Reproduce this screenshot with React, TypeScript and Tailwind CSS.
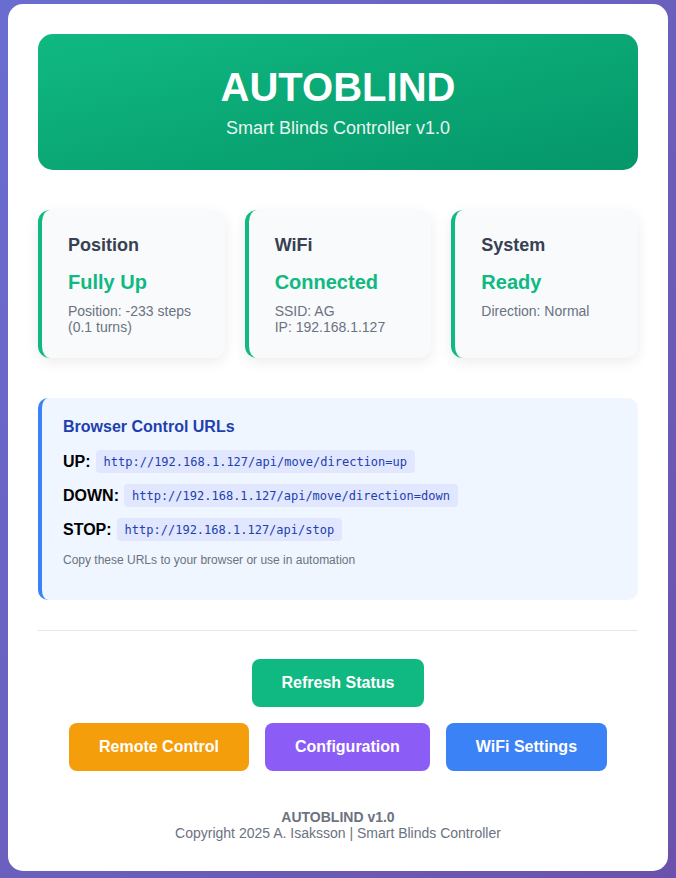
const sans = { fontFamily: '"Liberation Sans", Arial, sans-serif' };

function StatusCard({ title, value, lines }: { title: string; value: string; lines: string[] }) {
  return (
    <div className="bg-[#f8fafc] rounded-xl border-l-4 border-[#10b981] pl-[26px] pr-[25px] pt-[25px] pb-[23px] shadow-[0_4px_14px_rgba(0,0,0,0.08)]">
      <h3 className="text-[18px] leading-[21px] font-bold text-[#374151] mb-[15px]">{title}</h3>
      <div className="text-[20px] leading-[23px] font-bold text-[#10b981] mb-[9px]">{value}</div>
      <div className="text-[14px] leading-[16px] text-[#6b7280]">
        {lines.map((l) => (
          <div key={l}>{l}</div>
        ))}
      </div>
    </div>
  );
}

function UrlRow({ label, url, last }: { label: string; url: string; last?: boolean }) {
  return (
    <div className={`flex items-center h-[23px] ${last ? "mb-3" : "mb-[11px]"}`}>
      <span className="text-[16px] font-bold text-black">{label}</span>
      <code className="ml-[5px] h-[23px] flex items-center px-2 rounded bg-[#e0e7ff] text-[12px] text-[#1e40af] font-['DejaVu_Sans_Mono',monospace]">
        {url}
      </code>
    </div>
  );
}

function Btn({ label, color }: { label: string; color: string }) {
  return (
    <button className={`${color} h-[48px] px-[30px] rounded-lg text-white text-[16px] font-bold`}>
      {label}
    </button>
  );
}

export default function App() {
  return (
    <div className="min-h-screen bg-linear-to-br from-[#6a6dd0] to-[#6a52ac] px-2 pt-1 pb-[7px]" style={sans}>
      <div className="bg-white rounded-[15px] p-[30px]">
        {/* Header */}
        <div className="rounded-[15px] bg-linear-to-br from-[#10b981] to-[#059669] text-white text-center px-[30px] pt-[30px] pb-[31px]">
          <h1 className="text-[40px] leading-[46px] font-bold mb-2">AUTOBLIND</h1>
          <p className="text-[18px] leading-[21px] opacity-90">Smart Blinds Controller v1.0</p>
        </div>

        {/* Status cards */}
        <div className="grid grid-cols-3 gap-5 mt-10">
          <StatusCard title="Position" value="Fully Up" lines={["Position: -233 steps", "(0.1 turns)"]} />
          <StatusCard title="WiFi" value="Connected" lines={["SSID: AG", "IP: 192.168.1.127"]} />
          <StatusCard title="System" value="Ready" lines={["Direction: Normal"]} />
        </div>

        {/* URLs */}
        <div className="mt-10 bg-[#eff6ff] border-l-4 border-[#3b82f6] rounded-[10px] pl-[21px] pr-5 pt-5 pb-[33px]">
          <h4 className="text-[16px] leading-[18px] font-bold text-[#1e40af] mb-[14px]">Browser Control URLs</h4>
          <UrlRow label="UP:" url="http://192.168.1.127/api/move/direction=up" />
          <UrlRow label="DOWN:" url="http://192.168.1.127/api/move/direction=down" />
          <UrlRow label="STOP:" url="http://192.168.1.127/api/stop" last />
          <p className="text-[12px] leading-[14px] text-[#6b7280]">Copy these URLs to your browser or use in automation</p>
        </div>

        <hr className="mt-[30px] border-0 border-t border-[#e5e7eb]" />

        {/* Buttons */}
        <div className="mt-[28px] flex justify-center">
          <Btn label="Refresh Status" color="bg-[#10b981]" />
        </div>
        <div className="mt-4 flex justify-center gap-4">
          <Btn label="Remote Control" color="bg-[#f59e0b]" />
          <Btn label="Configuration" color="bg-[#8b5cf6]" />
          <Btn label="WiFi Settings" color="bg-[#3b82f6]" />
        </div>

        {/* Footer */}
        <div className="mt-[38px] text-center text-[14px] leading-[16px] text-[#6b7280]">
          <div className="font-bold">AUTOBLIND v1.0</div>
          <div>Copyright 2025 A. Isaksson | Smart Blinds Controller</div>
        </div>
      </div>
    </div>
  );
}
